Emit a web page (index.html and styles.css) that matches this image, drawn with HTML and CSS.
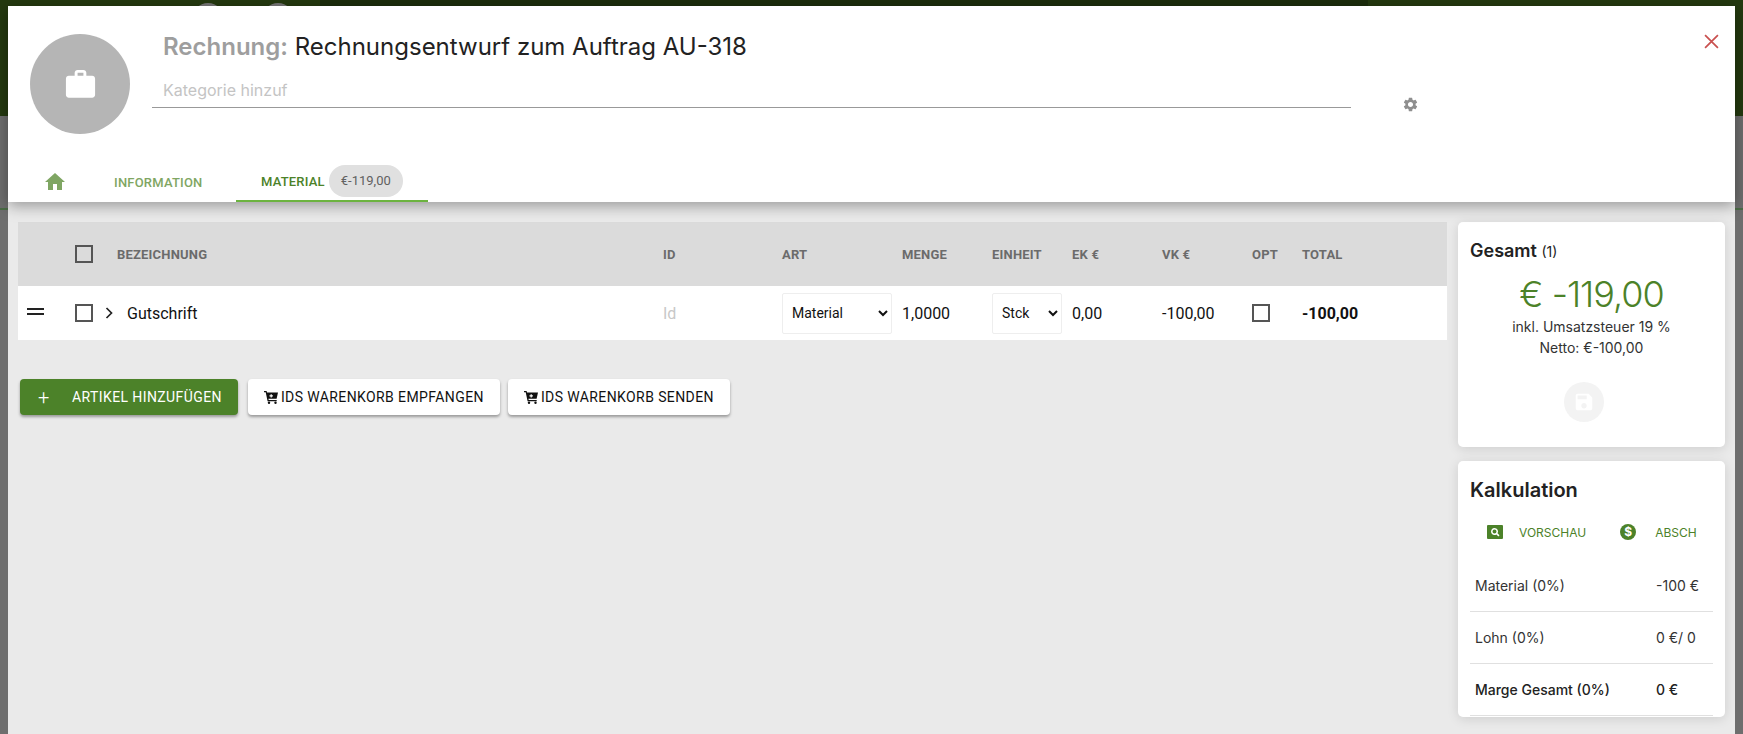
FILE: index.html
```html
<!DOCTYPE html>
<html>
<head>
    <title>Rechnung</title>
    <link rel="stylesheet" href="styles.css">
</head>
<body>
    <!-- page behind the dialog -->
    <div class="backdrop">
        <div class="backdrop-bar">
            <div class="backdrop-logo">
                <span class="backdrop-dot"></span>
                <span class="backdrop-dot"></span>
            </div>
            <div class="backdrop-menu"></div>
        </div>
        <div class="backdrop-rule"></div>
    </div>

    <div class="dialog">
        <div class="dialog-head">
            <div class="head-top">
                <div class="avatar">
                    <svg viewBox="0 0 24 24" width="35" height="35"><path fill="#fff" d="M20 6h-4V4c0-1.11-.89-2-2-2h-4c-1.11 0-2 .89-2 2v2H4c-1.11 0-1.99.89-1.99 2L2 19c0 1.11.89 2 2 2h16c1.11 0 2-.89 2-2V8c0-1.11-.89-2-2-2zm-6 0h-4V4h4v2z"/></svg>
                </div>
                <div class="head-fields">
                    <div class="title"><b>Rechnung:</b> Rechnungsentwurf zum Auftrag AU-318</div>
                    <div class="category">Kategorie hinzuf</div>
                </div>
                <svg class="gear" viewBox="0 0 24 24" width="17" height="17"><path fill="#8f8f8f" d="M19.14 12.94c.04-.3.06-.61.06-.94 0-.32-.02-.64-.07-.94l2.03-1.58a.49.49 0 0 0 .12-.61l-1.92-3.32a.488.488 0 0 0-.59-.22l-2.39.96c-.5-.38-1.03-.7-1.62-.94l-.36-2.54a.484.484 0 0 0-.48-.41h-3.84c-.24 0-.43.17-.47.41l-.36 2.54c-.59.24-1.13.57-1.62.94l-2.39-.96c-.22-.08-.47 0-.59.22L2.74 8.87c-.12.21-.08.47.12.61l2.03 1.58c-.05.3-.09.63-.09.94s.02.64.07.94l-2.03 1.58a.49.49 0 0 0-.12.61l1.92 3.32c.12.22.37.29.59.22l2.39-.96c.5.38 1.03.7 1.62.94l.36 2.54c.05.24.24.41.48.41h3.84c.24 0 .44-.17.47-.41l.36-2.54c.59-.24 1.13-.56 1.62-.94l2.39.96c.22.08.47 0 .59-.22l1.92-3.32c.12-.22.07-.47-.12-.61l-2.01-1.58zM12 15.6c-1.98 0-3.6-1.62-3.6-3.6s1.62-3.6 3.6-3.6 3.6 1.62 3.6 3.6-1.62 3.6-3.6 3.6z"/></svg>
                <svg class="close" viewBox="0 0 14 14" width="15" height="15"><path stroke="#c9504f" stroke-width="1.6" d="M1 1l12 12M13 1L1 13"/></svg>
            </div>
            <div class="tabs">
                <div class="tab tab-home">
                    <svg viewBox="0 0 24 24" width="24" height="24"><path fill="#7fa663" d="M10 20v-6h4v6h5v-8h3L12 3 2 12h3v8z"/></svg>
                </div>
                <div class="tab tab-info">Information</div>
                <div class="tab tab-active">Material<span class="chip">€-119,00</span></div>
            </div>
        </div>

        <div class="dialog-body">
            <div class="main">
                <div class="grid grid-head">
                    <div></div>
                    <div><span class="check"></span></div>
                    <div>Bezeichnung</div>
                    <div>ID</div>
                    <div>Art</div>
                    <div>Menge</div>
                    <div>Einheit</div>
                    <div>EK €</div>
                    <div>VK €</div>
                    <div>Opt</div>
                    <div>Total</div>
                </div>
                <div class="grid grid-row">
                    <div class="handle"><span></span><span></span></div>
                    <div class="check-cell">
                        <span class="check"></span>
                        <svg viewBox="0 0 8 12" width="8" height="12"><path fill="none" stroke="#222" stroke-width="1.7" d="M1.5 1l5 5-5 5"/></svg>
                    </div>
                    <div class="name">Gutschrift</div>
                    <div class="placeholder">Id</div>
                    <div><select class="select select-art"><option>Material</option></select></div>
                    <div>1,0000</div>
                    <div><select class="select select-unit"><option>Stck</option></select></div>
                    <div>0,00</div>
                    <div>-100,00</div>
                    <div><span class="check"></span></div>
                    <div class="total">-100,00</div>
                </div>

                <div class="actions">
                    <button class="btn btn-green"><span class="plus">+</span>Artikel hinzufügen</button>
                    <button class="btn">
                        <svg viewBox="0 0 14 13" width="14" height="13"><path fill="#111" fill-rule="evenodd" d="M0 0h2.6l.4 1.6H14l-1.4 6.2H4.4l.3 1.3h8v1.2H3.6L1.7 1.2H0zM6.6 3.2v1.1H5.5v1.2h1.1v1.1h1.2V5.5h1.1V4.3H7.800V3.200z"/><circle cx="5" cy="11.800" r="1.200" fill="#111"/><circle cx="11.500" cy="11.800" r="1.200" fill="#111"/></svg>
                        IDS Warenkorb empfangen
                    </button>
                    <button class="btn">
                        <svg viewBox="0 0 14 13" width="14" height="13"><path fill="#111" fill-rule="evenodd" d="M0 0h2.6l.4 1.6H14l-1.4 6.2H4.4l.3 1.3h8v1.2H3.6L1.7 1.2H0zM6.6 3.2v1.1H5.5v1.2h1.1v1.1h1.2V5.5h1.1V4.3H7.800V3.200z"/><circle cx="5" cy="11.800" r="1.200" fill="#111"/><circle cx="11.500" cy="11.800" r="1.200" fill="#111"/></svg>
                        IDS Warenkorb senden
                    </button>
                </div>
            </div>

            <div class="side">
                <div class="card card-sum">
                    <div class="card-title">Gesamt <small>(1)</small></div>
                    <div class="amount">€ -119,00</div>
                    <div class="sum-note">inkl. Umsatzsteuer 19 %</div>
                    <div class="sum-note">Netto: €-100,00</div>
                    <div class="save">
                        <svg viewBox="0 0 24 24" width="22" height="22"><path fill="#fff" d="M17 3H5c-1.110 0-2 .9-2 2v14c0 1.100.89 2 2 2h14c1.100 0 2-.9 2-2V7l-4-4zm-5 16c-1.660 0-3-1.340-3-3s1.340-3 3-3 3 1.340 3 3-1.340 3-3 3zm3-10H5V5h10v4z"/></svg>
                    </div>
                </div>
                <div class="card card-calc">
                    <div class="card-title card-title-big">Kalkulation</div>
                    <div class="calc-links">
                        <span class="calc-link">
                            <svg viewBox="0 0 16 14" width="16" height="14"><path fill="#4c8229" fill-rule="evenodd" d="M1 0h14a1 1 0 0 1 1 1v12a1 1 0 0 1-1 1H1a1 1 0 0 1-1-1V1a1 1 0 0 1 1-1zm6.500 3a3.500 3.500 0 1 0 1.900 6.450l2 2 1.100-1.100-2-2A3.500 3.500 0 0 0 7.500 3zm0 1.500a2 2 0 1 1 0 4 2 2 0 0 1 0-4z"/></svg>
                            Vorschau
                        </span>
                        <span class="calc-link calc-link-2">
                            <span class="dollar">$</span>
                            Absch
                        </span>
                    </div>
                    <div class="calc-row"><span>Material (0%)</span><span class="calc-value">-100 €</span></div>
                    <div class="calc-row"><span>Lohn (0%)</span><span class="calc-value">0 €/ 0</span></div>
                    <div class="calc-row calc-strong"><span>Marge Gesamt (0%)</span><span class="calc-value">0 €</span></div>
                </div>
            </div>
        </div>
    </div>
</body>
</html>
```

FILE: styles.css
```css
html, body {
    margin: 0;
    height: 734px;
    overflow: hidden;
}

body {
    position: relative;
    background-color: #6e6e6e;
    font-family: "Roboto", "Liberation Sans", sans-serif;
    color: #111;
}

/* dimmed page behind the dialog */
.backdrop-bar {
    display: flex;
    height: 116px;
    background-color: #24390f;
}

.backdrop-logo {
    display: flex;
    gap: 38px;
    width: 320px;
    padding: 3px 0 0 192px;
    box-sizing: border-box;
}

.backdrop-dot {
    width: 32px;
    height: 32px;
    border-radius: 50%;
    background-color: #777;
}

.backdrop-menu {
    width: 1048px;
    height: 30px;
    background-color: #1c2d0c;
}

.backdrop-rule {
    height: 92px;
    border-bottom: 2px solid #4a6b45;
}

/* dialog */
.dialog {
    position: absolute;
    top: 6px;
    left: 8px;
    width: 1727px;
    bottom: 0;
    display: flex;
    flex-direction: column;
    background-color: #eaeaea;
}

.dialog-head {
    position: relative;
    height: 196px;
    background-color: #fff;
    box-shadow: 0 4px 14px rgba(0, 0, 0, .35);
    z-index: 1;
}

.head-top {
    display: flex;
    padding: 28px 0 0 22px;
}

.avatar {
    display: flex;
    flex: none;
    align-items: center;
    justify-content: center;
    width: 100px;
    height: 100px;
    border-radius: 50%;
    background-color: #b5b5b5;
}

.head-fields {
    width: 1199px;
    margin-left: 22px;
}

.title {
    margin-top: -3px;
    padding-left: 11px;
    font-family: "Inter", "Liberation Sans", sans-serif;
    font-size: 24px;
    line-height: 32px;
    color: #222;
}

.title b {
    font-weight: 600;
    color: #9e9e9e;
}

.category {
    height: 45px;
    padding: 17px 0 0 11px;
    box-sizing: border-box;
    border-bottom: 1px solid #999;
    font-family: "Inter", "Liberation Sans", sans-serif;
    font-size: 16px;
    line-height: 20px;
    color: #c4c4c4;
}

.gear {
    margin: 62px 0 0 51px;
}

.close {
    margin: 0 0 0 285px;
}

.tabs {
    position: absolute;
    left: 0;
    bottom: 0;
    display: flex;
    align-items: stretch;
    height: 40px;
    font-size: 13px;
    font-weight: 500;
    text-transform: uppercase;
    letter-spacing: .2px;
}

.tab {
    display: flex;
    align-items: center;
    height: 100%;
    box-sizing: border-box;
}

.tab-home {
    padding-left: 35px;
    width: 106px;
}

.tab-info {
    width: 122px;
    color: #7fa663;
}

.tab-active {
    width: 192px;
    padding-left: 25px;
    color: #4c8229;
    border-bottom: 2px solid #6cb33f;
}

.chip {
    margin-left: 4px;
    padding: 0 12px;
    height: 32px;
    line-height: 32px;
    border-radius: 16px;
    background-color: #e0e0e0;
    color: #616161;
    font-weight: 400;
    text-transform: none;
    letter-spacing: 0;
}

.dialog-body {
    display: flex;
    flex: 1;
    padding: 20px 10px 0 10px;
}

.main {
    width: 1429px;
}

/* article table */
.grid {
    display: grid;
    grid-template-columns: 57px 42px 546px 119px 120px 90px 80px 90px 90px 50px 1fr;
    align-items: center;
}

.grid-head {
    height: 64px;
    background-color: #dbdbdb;
    font-size: 13px;
    font-weight: 700;
    color: #6b6b6b;
    text-transform: uppercase;
    letter-spacing: .2px;
}

.grid-row {
    height: 54px;
    background-color: #fff;
    font-size: 16px;
}

.check {
    display: block;
    width: 18px;
    height: 18px;
    box-sizing: border-box;
    border: 2px solid #555;
}

.check-cell {
    display: flex;
    align-items: center;
    gap: 12px;
}

.handle span {
    display: block;
    width: 17px;
    height: 2px;
    margin: 0 0 3px 9px;
    background-color: #222;
}

.name {
    padding-left: 10px;
}

.placeholder {
    color: #c8c8c8;
}

.total {
    font-weight: 700;
}

.select {
    display: block;
    height: 41px;
    padding: 0 0 0 5px;
    border: 1px solid #eee;
    border-radius: 2px;
    background-color: #fff;
    font-family: "Roboto", "Liberation Sans", sans-serif;
    font-size: 14px;
    color: #111;
}

.select-art {
    width: 110px;
}

.select-unit {
    width: 70px;
}

.actions {
    display: flex;
    gap: 8px;
    margin: 39px 0 0 2px;
}

.btn {
    display: flex;
    align-items: center;
    gap: 3px;
    height: 36px;
    padding: 0 16px;
    border: 0;
    border-radius: 4px;
    background-color: #fff;
    box-shadow: 0 2px 3px rgba(0, 0, 0, .35);
    font-family: "Roboto", "Liberation Sans", sans-serif;
    font-size: 14px;
    font-weight: 400;
    color: #111;
    text-transform: uppercase;
    letter-spacing: .4px;
}

.btn-green {
    margin-right: 2px;
    padding: 0 16px 0 18px;
    background-color: #4c8229;
    color: #fff;
}

.plus {
    width: 31px;
    font-size: 20px;
    font-weight: 300;
    text-align: left;
}

/* right column */
.side {
    display: flex;
    flex-direction: column;
    gap: 14px;
    width: 267px;
    margin-left: 11px;
    font-family: "Inter", "Liberation Sans", sans-serif;
}

.card {
    box-sizing: border-box;
    border-radius: 5px;
    background-color: #fff;
    box-shadow: 0 2px 12px rgba(0, 0, 0, .12);
    padding: 0 12px;
}

.card-sum {
    height: 225px;
    padding-top: 18px;
    text-align: center;
}

.card-calc {
    height: 256px;
    padding-top: 15px;
}

.card-title {
    font-size: 18px;
    font-weight: 600;
    line-height: 22px;
    text-align: left;
    color: #222;
}

.card-title small {
    font-size: 14px;
    font-weight: 400;
}

.card-title-big {
    font-size: 20px;
    line-height: 28px;
}

.amount {
    margin-top: 9px;
    font-size: 36px;
    font-weight: 300;
    line-height: 44px;
    letter-spacing: -1px;
    color: #4c8229;
}

.sum-note {
    font-size: 14px;
    line-height: 21px;
    color: #333;
}

.sum-note:first-of-type {
    margin-top: 12px;
}

.save {
    display: flex;
    align-items: center;
    justify-content: center;
    width: 40px;
    height: 40px;
    margin: 24px 0 0 94px;
    border-radius: 50%;
    background-color: #f3f3f3;
}

.calc-links {
    display: flex;
    align-items: center;
    height: 32px;
    margin: 12px 0 12px 17px;
    font-size: 12px;
    color: #4c8229;
    text-transform: uppercase;
}

.calc-link {
    display: flex;
    align-items: center;
    gap: 16px;
}

.calc-link-2 {
    margin-left: 34px;
    gap: 19px;
}

.dollar {
    display: block;
    width: 16px;
    height: 16px;
    border-radius: 50%;
    background-color: #4c8229;
    color: #fff;
    font-size: 12px;
    font-weight: 700;
    line-height: 16px;
    text-align: center;
}

.calc-row {
    display: grid;
    grid-template-columns: 181px 1fr;
    align-items: center;
    height: 52px;
    box-sizing: border-box;
    padding-left: 5px;
    border-bottom: 1px solid #e0e0e0;
    font-size: 14px;
    color: #333;
}

.calc-strong {
    font-weight: 500;
    color: #222;
}
```
